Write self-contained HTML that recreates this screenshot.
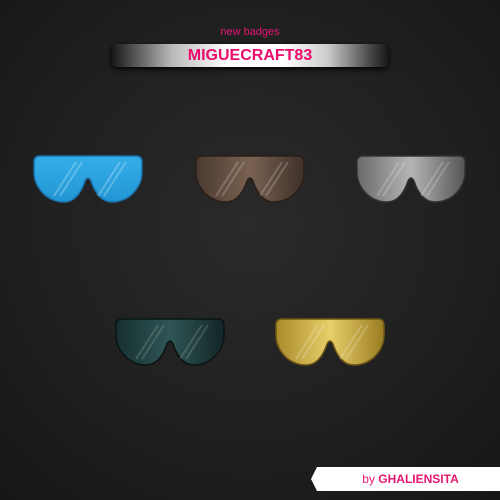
<!DOCTYPE html>
<html><head><style>
body{margin:0;width:500px;height:500px;overflow:hidden;background:radial-gradient(circle at 50% 45%,#2a2a2a 0%,#1f1f1f 60%,#161616 100%);font-family:"Liberation Sans",sans-serif;position:relative}
.nb{position:absolute;top:26px;width:500px;text-align:center;color:#e6176f;font-size:11px}
.ban{position:absolute;left:112px;top:44px;width:276px;height:23px;border-radius:4px;background:linear-gradient(90deg,#181818 0%,#444 6%,#bbb 22%,#fff 42%,#fff 62%,#ccc 78%,#444 94%,#181818 100%);text-align:center;line-height:24px;color:#ec0c6e;font-weight:bold;font-size:16px;box-shadow:0 2px 6px #000}
.tag{position:absolute;left:311px;top:467px;width:189px;height:24px;background:#fff;clip-path:polygon(6px 0,100% 0,100% 100%,6px 100%,0 50%);line-height:25px;font-size:12px;color:#e6176f;text-align:center;padding-left:10px;box-sizing:border-box;font-weight:bold}
</style></head><body>
<div class="nb">new badges</div>
<div class="ban">MIGUECRAFT83</div>
<svg width="500" height="500" style="position:absolute;left:0;top:0">
<defs>
<path id="gg" d="M6,0 H102 Q108,0 108,6 V16 Q108,30 96,40 Q88,46 78,46 Q64,46 57,25 Q54,19 51,25 Q44,46 30,46 Q20,46 12,40 Q0,30 0,16 V6 Q0,0 6,0 Z"/>
<linearGradient id="b" x1="0" y1="0" x2="0" y2="1"><stop offset="0" stop-color="#35aee8"/><stop offset="1" stop-color="#2196d4"/></linearGradient>
<linearGradient id="br" x1="0" y1="0" x2="1" y2="0"><stop offset="0" stop-color="#4a3a30"/><stop offset=".5" stop-color="#7a6252"/><stop offset="1" stop-color="#3e3029"/></linearGradient>
<linearGradient id="gr" x1="0" y1="0" x2="1" y2="0"><stop offset="0" stop-color="#6a6a6a"/><stop offset=".5" stop-color="#b5b5b5"/><stop offset="1" stop-color="#555"/></linearGradient>
<linearGradient id="tl" x1="0" y1="0" x2="1" y2="0"><stop offset="0" stop-color="#163030"/><stop offset=".5" stop-color="#2f5555"/><stop offset="1" stop-color="#122626"/></linearGradient>
<linearGradient id="go" x1="0" y1="0" x2="1" y2="0"><stop offset="0" stop-color="#a88a2a"/><stop offset=".5" stop-color="#e8cf6a"/><stop offset="1" stop-color="#9a7c22"/></linearGradient>
</defs>
<g transform="translate(34,156)"><use href="#gg" fill="url(#b)" stroke="#1a6fa8" stroke-width="1.5"/><path d="M20,40 L42,6 M26,40 L48,6 M64,40 L86,6 M70,40 L92,6" stroke="#fff" stroke-opacity=".25" stroke-width="2"/></g>
<g transform="translate(196,156)"><use href="#gg" fill="url(#br)" stroke="#2a1f18" stroke-width="1.5"/><path d="M20,40 L42,6 M26,40 L48,6 M64,40 L86,6 M70,40 L92,6" stroke="#fff" stroke-opacity=".2" stroke-width="2"/></g>
<g transform="translate(357,156)"><use href="#gg" fill="url(#gr)" stroke="#333" stroke-width="1.5"/><path d="M20,40 L42,6 M26,40 L48,6 M64,40 L86,6 M70,40 L92,6" stroke="#fff" stroke-opacity=".2" stroke-width="2"/></g>
<g transform="translate(116,319)"><use href="#gg" fill="url(#tl)" stroke="#0a1414" stroke-width="1.5"/><path d="M20,40 L42,6 M26,40 L48,6 M64,40 L86,6 M70,40 L92,6" stroke="#fff" stroke-opacity=".15" stroke-width="2"/></g>
<g transform="translate(276,319)"><use href="#gg" fill="url(#go)" stroke="#6e5614" stroke-width="1.5"/><path d="M20,40 L42,6 M26,40 L48,6 M64,40 L86,6 M70,40 L92,6" stroke="#fff" stroke-opacity=".2" stroke-width="2"/></g>
</svg>
<div class="tag"><span style="font-weight:normal">by</span> GHALIENSITA</div>
</body></html>
